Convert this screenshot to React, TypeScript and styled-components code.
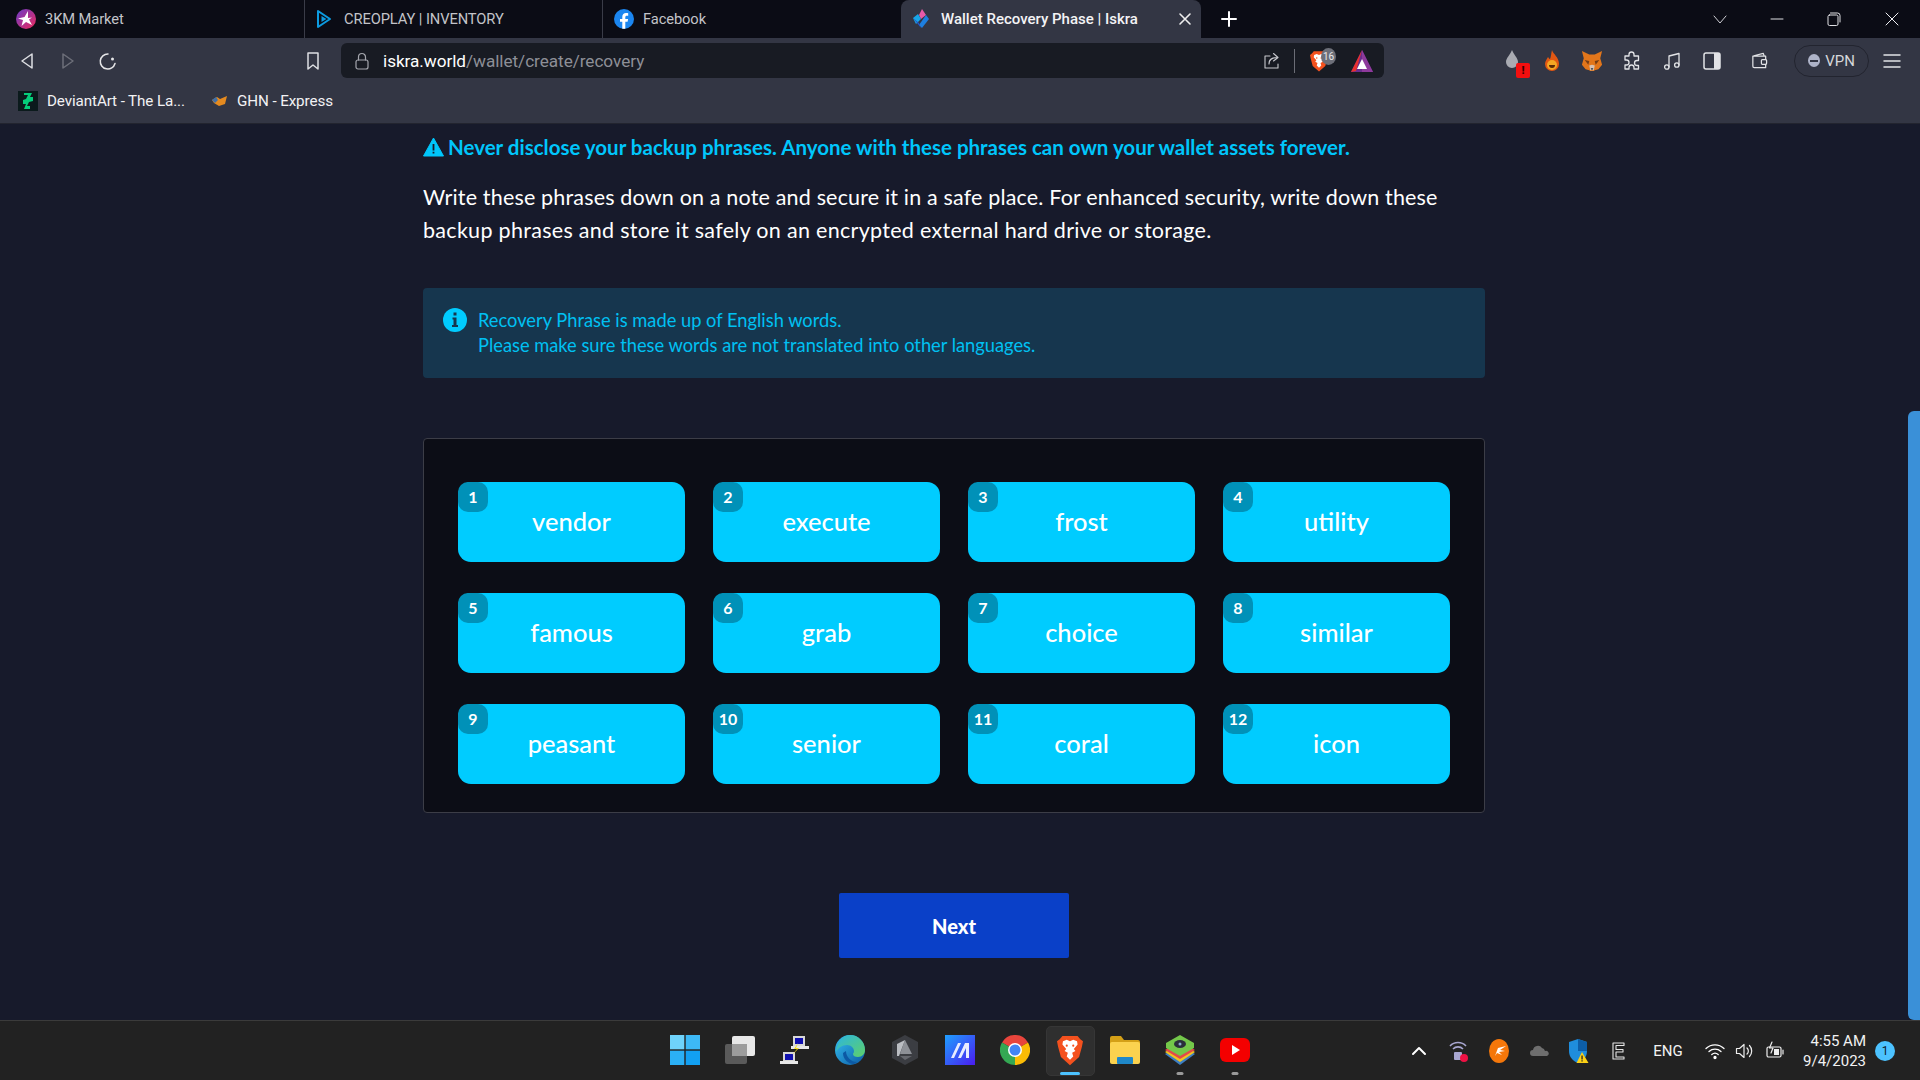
import React from "react";
import styled, { createGlobalStyle } from "styled-components";

const Global = createGlobalStyle`
  html, body { margin: 0; padding: 0; width: 1920px; height: 1080px; overflow: hidden; background: #171a2b; }
  * { box-sizing: border-box; }
  #root { width: 1920px; height: 1080px; }
`;

const UI = `Roboto, "Noto Sans", sans-serif`;
const PAGE = `Lato, "Open Sans", sans-serif`;

const Shell = styled.div`
  width: 1920px; height: 1080px; display: flex; flex-direction: column; font-family: ${UI};
`;
const TabStrip = styled.div`
  height: 38px; background: #0b0c15; display: flex; align-items: stretch; flex: none;
`;
const Tab = styled.div<{ $w: number; $pad: number; $sep?: boolean }>`
  width: ${p => p.$w}px; flex: none; display: flex; align-items: center; gap: 9px; padding-left: ${p => p.$pad}px;
  color: #c3c4c9; font-size: 14.7px; letter-spacing: -0.1px; position: relative;
  border-right: ${p => (p.$sep ? "1px solid #3a3c48" : "none")};
`;
const ActiveTab = styled.div`
  width: 300px; flex: none; background: #333644; border-radius: 8px 8px 0 0; display: flex; align-items: center;
  padding: 0 9px 0 11px; gap: 11px; color: #f3f3f5; font-size: 15px; font-weight: 500;
`;
const TabTitle = styled.span` flex: 1; white-space: nowrap; `;
const NewTab = styled.div` width: 56px; display: flex; align-items: center; justify-content: center; `;
const WindowControls = styled.div` margin-left: auto; display: flex; align-items: center; `;
const WinBtn = styled.div<{ $w: number }>` width: ${p => p.$w}px; display: flex; justify-content: center; align-items: center; `;

const Chrome = styled.div` height: 86px; background: #333644; flex: none; display: flex; flex-direction: column; border-bottom: 1px solid #22242f; `;
const ToolRow = styled.div` height: 45px; padding: 5px 0 5px 7px; display: flex; align-items: center; flex: none; `;
const IconBtn = styled.div<{ $w?: number; $pl?: number }>`
  width: ${p => p.$w ?? 40}px; height: 35px; flex: none; display: flex; align-items: center; justify-content: center; position: relative;
  padding-left: ${p => p.$pl ?? 0}px;
`;
const Spacer = styled.div<{ $w: number }>` width: ${p => p.$w}px; flex: none; `;
const Address = styled.div`
  width: 1043px; height: 35px; margin-left: 8px; background: #181b23; border-radius: 6px; flex: none;
  display: flex; align-items: center; padding-left: 12px; font-size: 17.2px;
`;
const Url = styled.div` margin-left: 12px; color: #8d8f97; flex: 1; white-space: nowrap; letter-spacing: -0.05px; `;
const Host = styled.span` color: #fff; `;
const ShareGap = styled.span` width: 9px; flex: none; `;
const AddrDivider = styled.div` width: 1px; height: 24px; background: #6b6d76; margin: 0 4px; flex: none; `;
const ShieldBtn = styled.div` width: 40px; height: 35px; position: relative; display: flex; align-items: center; justify-content: center; flex: none; `;
const ShieldCount = styled.div`
  position: absolute; top: 5px; left: 22px; width: 15px; height: 17px; background: #6d6f79; color: #e8e8ea; border-radius: 50%;
  font-size: 10px; display: flex; align-items: center; justify-content: center;
`;
const AlertBadge = styled.div`
  position: absolute; right: 2px; bottom: 0; width: 14px; height: 15px; background: #f40f0f; border-radius: 2px; color: #3a0000;
  font-size: 11px; font-weight: 900; display: flex; align-items: center; justify-content: center;
`;
const Vpn = styled.div`
  width: 75px; height: 32px; border: 1px solid #22242f; border-radius: 16px; display: flex; align-items: center; justify-content: center; gap: 5px;
  color: #d5d6da; font-size: 15px; margin-left: 15px; flex: none;
`;
const VpnDot = styled.span`
  width: 12px; height: 13px; border-radius: 50%; background: #aeb3c8; display: flex; align-items: center; justify-content: center;
  &::after { content: ""; width: 8px; height: 2px; background: #333644; }
`;
const Bookmarks = styled.div` height: 40px; display: flex; align-items: center; padding: 0 0 4px 18px; color: #f2f2f4; font-size: 15.2px; letter-spacing: -0.1px; `;
const Bookmark = styled.div<{ $w: number }>` width: ${p => p.$w}px; display: flex; align-items: center; gap: 9px; white-space: nowrap; flex: none; `;

const Main = styled.main`
  flex: 1; min-height: 0; background: #171a2b; position: relative; padding: 11px 12px 0 0; overflow: hidden;
`;
const Scrollbar = styled.div`
  position: absolute; right: 0; top: 287px; bottom: 0; width: 12px; background: #3a90d8; border-radius: 6px 0 0 6px;
`;
const Content = styled.div` width: 1062px; margin: 0 auto; display: flex; flex-direction: column; align-items: stretch; `;
const Warning = styled.div`
  height: 24px; display: flex; align-items: center; gap: 4px; color: #00c6fb; font-family: ${PAGE}; font-size: 20.5px; font-weight: 700;
  white-space: nowrap;
`;
const Para = styled.p`
  margin: 22px 0 0; color: #fff; font-family: ${PAGE}; font-size: 21.5px; line-height: 33px; font-weight: 400; white-space: nowrap;
`;
const ParaLine = styled.span<{ $ls: number }>` display: block; letter-spacing: ${p => p.$ls}px; `;
const Info = styled.div`
  margin-top: 41px; height: 90px; background: #16364e; border-radius: 4px; display: flex; padding: 20px 20px; gap: 11px;
`;
const InfoText = styled.div` color: #00c0f2; font-family: ${PAGE}; font-size: 18.3px; line-height: 25px; white-space: nowrap; `;
const Card = styled.section`
  margin-top: 60px; height: 375px; background: #0c0d16; border: 1px solid #3c3d47; border-radius: 4px; padding: 43px 34px 27px 34px;
  display: grid; grid-template-columns: repeat(4, 227px); grid-auto-rows: 80px; column-gap: 28px; row-gap: 31px;
`;
const Word = styled.div`
  background: #00ccff; border-radius: 13px; position: relative; display: flex; align-items: center; justify-content: center;
  color: #fff; font-family: ${PAGE}; font-size: 25.5px; font-weight: 500; padding-bottom: 2px;
`;
const Num = styled.span`
  position: absolute; left: 0; top: 0; width: 30px; height: 28px; background: #0091b8; border-radius: 10px; color: #fff;
  display: flex; align-items: center; justify-content: center; font-family: ${PAGE}; font-size: 16px; font-weight: 700; padding-bottom: 1px; height: 30px;
`;
const NextWrap = styled.div` margin-top: 80px; display: flex; justify-content: center; `;
const Next = styled.button`
  width: 230px; height: 65px; background: #0a40c8; color: #fff; border: 0; border-radius: 2px; font-family: ${PAGE}; font-size: 20px; font-weight: 900;
`;

const Taskbar = styled.footer`
  height: 60px; flex: none; background: #222222; border-top: 1px solid #3b3b3b; display: grid; grid-template-columns: 1fr auto 1fr; align-items: center;
`;
const TaskIcons = styled.div` grid-column: 2; display: flex; `;
const TaskIcon = styled.div<{ $active?: boolean }>`
  width: 55px; height: 50px; padding-bottom: 2px; display: flex; align-items: center; justify-content: center; position: relative; border-radius: 5px; flex: none;
  &::before { content: ""; position: absolute; left: 3px; right: 3px; top: 0; bottom: 0; border-radius: 5px; background: ${p => (p.$active ? "#2f2f2f" : "transparent")};
    border: ${p => (p.$active ? "1px solid #363636" : "0")}; }
  & > svg { position: relative; }
`;
const Dot = styled.span<{ $on?: boolean }>`
  position: absolute; bottom: 1px; left: 50%; transform: translateX(-50%); height: 3px; border-radius: 2px;
  width: ${p => (p.$on ? "20px" : "7px")}; background: ${p => (p.$on ? "#4cc2ff" : "#9a9a9a")};
`;
const Tray = styled.div` grid-column: 3; justify-self: end; display: flex; align-items: center; padding-right: 25px; color: #fff; `;
const TrayIcon = styled.div<{ $w?: number }>` width: ${p => p.$w ?? 40}px; height: 40px; display: flex; align-items: center; justify-content: center; flex: none; `;
const Eng = styled.div` width: 48px; text-align: center; font-size: 15px; color: #f2f2f2; flex: none; margin-left: 5px; margin-right: 8px; `;
const Clock = styled.div` text-align: right; font-size: 15px; line-height: 20px; color: #f2f2f2; width: 76px; flex: none; `;
const Notif = styled.div`
  width: 20px; height: 20px; background: #4cc2ff; border-radius: 50%; color: #10202a; font-size: 12px; display: flex; align-items: center; justify-content: center; margin-left: 9px; flex: none;
`;

const Stroke = ({ size = 20, color = "#e6e6e8", sw = 1.5, vb = 20, children }: { size?: number; color?: string; sw?: number; vb?: number; children: React.ReactNode }) => (
  <svg width={size} height={size} viewBox={`0 0 ${vb} ${vb}`} fill="none" stroke={color} strokeWidth={sw} strokeLinecap="round" strokeLinejoin="round">{children}</svg>
);

const BraveGlyph = ({ w = 18, h = 22 }: { w?: number; h?: number }) => (
  <svg width={w} height={h} viewBox="0 0 24 28">
    <path d="M5 1h14l2.5 3L24 6l-1 5-2.6 9.5L12 28 3.6 20.5 1 11 0 6l2.5-2z" fill="#f4511e" />
    <path d="M12 6l-3-1.5L5.5 6 5 9l3.5 4-1.5 2 3 1.5L9 20l3 3 3-3-1-3.5 3-1.5-1.5-2L19 9l-.5-3-3.5-1.5z" fill="#fff" />
    <circle cx="9" cy="10" r="1" fill="#f4511e" /><circle cx="15" cy="10" r="1" fill="#f4511e" />
  </svg>
);

const Fox = ({ size = 22 }: { size?: number }) => (
  <svg width={size} height={size} viewBox="0 0 24 24">
    <path d="M1 1l8 4h6l8-4-2 8 2 7-4 5-4 1-1 1h-4l-1-1-4-1-4-5 2-7z" fill="#e2761b" />
    <path d="M4 11l5 1-1 4zM20 11l-5 1 1 4z" fill="#763d16" />
    <path d="M9 17l3-1 3 1-1 5h-4z" fill="#d7c1b3" />
    <path d="M10.5 20h3l-1.5 2z" fill="#233447" />
  </svg>
);

const words = ["vendor", "execute", "frost", "utility", "famous", "grab", "choice", "similar", "peasant", "senior", "coral", "icon"];

export default function App() {
  return (
    <Shell>
      <Global />
      <TabStrip>
        <Tab $w={305} $pad={16} $sep>
          <svg width="20" height="20" viewBox="0 0 20 20">
            <defs><linearGradient id="k" x1="0" y1="0" x2="1" y2="1"><stop offset="0" stopColor="#6a3bc8" /><stop offset="1" stopColor="#ee2a5c" /></linearGradient></defs>
            <circle cx="10" cy="10" r="10" fill="url(#k)" />
            <path d="M12 2L8.5 8 2 9.5l5 1.5-1.5 6 4.5-4 6 3-3-5.5 3-2-4 .5z" fill="#fff" />
          </svg>
          <span>3KM Market</span>
        </Tab>
        <Tab $w={298} $pad={11} $sep>
          <svg width="16" height="20" viewBox="0 0 16 20" fill="none"><path d="M2 2l12 8-12 8z" stroke="#0c9be0" strokeWidth="2" strokeLinejoin="round" /><path d="M5.5 7l5 3-5 3z" fill="#0c9be0" /></svg>
          <span style={{ marginLeft: 3 }}>CREOPLAY | INVENTORY</span>
        </Tab>
        <Tab $w={298} $pad={11}>
          <svg width="20" height="20" viewBox="0 0 20 20"><circle cx="10" cy="10" r="10" fill="#1b86f0" /><path d="M13.6 12.8l.5-2.8h-2.8V8.2c0-.8.4-1.5 1.6-1.5h1.3V4.3s-1.1-.2-2.2-.2c-2.2 0-3.7 1.4-3.7 3.8V10H6v2.8h2.3v7h3v-7z" fill="#fff" /></svg>
          <span>Facebook</span>
        </Tab>
        <ActiveTab>
          <svg width="18" height="20" viewBox="0 0 18 20">
            <path d="M10 0l4 6-5 4-2-4z" fill="#e85aa8" /><path d="M9 10l-5 5-3-6 5-4z" fill="#18a6e8" /><path d="M14 6l3 4-7 9-3-3z" fill="#1e7fe0" /><path d="M1 9l8 10-2-5z" fill="#2456c8" />
          </svg>
          <TabTitle>Wallet Recovery Phase | Iskra</TabTitle>
          <Stroke size={14} vb={14} color="#eee" sw={1.6}><path d="M2 2l10 10M12 2L2 12" /></Stroke>
        </ActiveTab>
        <NewTab><Stroke size={16} vb={16} color="#fff" sw={2}><path d="M8 1v14M1 8h14" /></Stroke></NewTab>
        <WindowControls>
          <WinBtn $w={58}><Stroke size={14} vb={14} color="#cfcfd4" sw={1}><path d="M1 4l6 7 6-7" /></Stroke></WinBtn>
          <WinBtn $w={56}><Stroke size={14} vb={14} color="#e0e0e4" sw={1}><path d="M1 7h12" /></Stroke></WinBtn>
          <WinBtn $w={58}><Stroke size={14} vb={14} color="#e0e0e4" sw={1}><rect x="1" y="3" width="10" height="10.5" rx="1.5" /><path d="M3.5 1h7A2.5 2.5 0 0 1 13 3.5V10" /></Stroke></WinBtn>
          <WinBtn $w={57}><Stroke size={14} vb={14} color="#f0f0f4" sw={1}><path d="M1 1l12 12M13 1L1 13" /></Stroke></WinBtn>
        </WindowControls>
      </TabStrip>

      <Chrome>
        <ToolRow>
          <IconBtn><Stroke size={20} color="#dedfe3"><path d="M15 3v14L5 10z" /></Stroke></IconBtn>
          <IconBtn><Stroke size={20} color="#6d6f79"><path d="M6 3v14l10-7z" /></Stroke></IconBtn>
          <IconBtn><Stroke size={20} color="#e6e6e8"><path d="M11 3a7.5 7.5 0 1 0 7 9.5" /><circle cx="15.5" cy="8" r="1.5" fill="#e6e6e8" stroke="none" /></Stroke></IconBtn>
          <Spacer $w={166} />
          <IconBtn><Stroke size={20} color="#dedfe3"><path d="M5 2h10v16l-5-4-5 4z" /></Stroke></IconBtn>
          <Address>
            <Stroke size={18} vb={18} color="#a4a6ad" sw={1.2}><rect x="3" y="8" width="12" height="9" rx="2" /><path d="M5.5 8V5a3.5 3.5 0 0 1 7 0v3" /></Stroke>
            <Url><Host>iskra.world</Host>/wallet/create/recovery</Url>
            <Stroke size={20} color="#c8c9ce" sw={1.1}><path d="M9 5H4v12h13v-4" /><path d="M8 13c0-4 3-6.5 8-6.5M12.5 2.5L17 6.5l-4.5 3.5" /></Stroke>
            <ShareGap />
            <AddrDivider />
            <ShieldBtn>
              <BraveGlyph w={18} h={24} />
              <ShieldCount>16</ShieldCount>
            </ShieldBtn>
            <IconBtn $w={45}>
              <svg width="24" height="24" viewBox="0 0 24 24"><path d="M12 1l11 22H1z" fill="#6b2d8e" /><path d="M12 1l11 22H12z" fill="#8e3a9c" /><path d="M12 1L1 23l5-1z" fill="#e8302e" /><path d="M12 10l5 10H7z" fill="#fff" /></svg>
            </IconBtn>
          </Address>
          <Spacer $w={108} />
          <IconBtn>
            <svg width="16" height="24" viewBox="0 0 16 24"><path d="M8 1c2 5 6 8 6 12a6 6 0 0 1-12 0c0-4 4-7 6-12z" fill="#a9abb2" /></svg>
            <AlertBadge>!</AlertBadge>
          </IconBtn>
          <IconBtn>
            <svg width="16" height="22" viewBox="0 0 16 22"><path d="M8 0c1 4 7 7 7 14a7 7 0 0 1-14 0c0-3 2-5 3-7 1 1 1 2 2 2 1-2 1-5 2-9z" fill="#e25712" /><circle cx="8" cy="15" r="5" fill="#f5a623" /><path d="M5 15a3 3 0 0 0 6 0z" fill="#5b2a06" /></svg>
          </IconBtn>
          <IconBtn><Fox /></IconBtn>
          <IconBtn>
            <Stroke size={20} color="#e2e3e6" sw={1.3}><path d="M7 3.5a2.5 2.5 0 0 1 5 0V5h4.5v4.5H15a2.5 2.5 0 0 0 0 5h1.5V18H12v-1.5a2.5 2.5 0 0 0-5 0V18H3v-4h1.5a2.500 2.500 0 0 0 0-5H3V5h4z" /></Stroke>
          </IconBtn>
          <IconBtn>
            <Stroke size={20} color="#e2e3e6" sw={1.3}><path d="M7 16V5l10-2.5V14" /><circle cx="4.8" cy="16" r="2.2" /><circle cx="14.8" cy="14" r="2.2" /></Stroke>
          </IconBtn>
          <IconBtn>
            <svg width="18" height="18" viewBox="0 0 18 18"><rect x="1" y="1" width="16" height="16" rx="2" fill="none" stroke="#e2e3e6" strokeWidth="1.5" /><rect x="11" y="1" width="6" height="16" fill="#e2e3e6" /></svg>
          </IconBtn>
          <IconBtn $w={47} $pl={7}>
            <Stroke size={19} color="#e2e3e6" sw={1.3}><path d="M3 5.5V16a1.5 1.5 0 0 0 1.5 1.5h12V14M16.500 9V5.500h-13M4 5l10-2.500 1 3" /><rect x="12" y="9" width="5.5" height="5" rx="1" /></Stroke>
          </IconBtn>
          <Vpn><VpnDot />VPN</Vpn>
          <IconBtn $w={42} $pl={4}>
            <Stroke size={20} color="#e2e3e6" sw={1.5}><path d="M2 4h16M2 10h16M2 16h16" /></Stroke>
          </IconBtn>
        </ToolRow>
        <Bookmarks>
          <Bookmark $w={194}>
            <svg width="20" height="20" viewBox="0 0 20 20"><rect width="20" height="20" fill="#0b1a1c" /><path d="M14 2l-2 4h3v4l-4 1-2 4 3 0v3H6l2-5-3 0V9l3-1 2-4-4 0V2z" fill="#05cc7a" /></svg>
            <span>DeviantArt - The La...</span>
          </Bookmark>
          <Bookmark $w={140}>
            <svg width="16" height="12" viewBox="0 0 16 12"><path d="M0 5l5-3 3 2 7-3-2 8-6 2-5-3z" fill="#e58a1f" /><path d="M0 5l4-3 2 3-3 3z" fill="#3f6fa8" /></svg>
            <span>GHN - Express</span>
          </Bookmark>
        </Bookmarks>
      </Chrome>

      <Main>
        <Content>
          <Warning>
            <svg width="21" height="20" viewBox="0 0 21 20"><path d="M10.5 1L20.5 19H.5z" fill="#00c6fb" stroke="#00c6fb" strokeLinejoin="round" /><path d="M9.6 7h1.800v6.500H9.600zM9.600 14.700h1.800v1.800H9.600z" fill="#171a2b" /></svg>
            <span>Never disclose your backup phrases. Anyone with these phrases can own your wallet assets forever.</span>
          </Warning>
          <Para>
            <ParaLine $ls={0.17}>Write these phrases down on a note and secure it in a safe place. For enhanced security, write down these</ParaLine>
            <ParaLine $ls={0.3}>backup phrases and store it safely on an encrypted external hard drive or storage.</ParaLine>
          </Para>
          <Info>
            <svg width="24" height="24" viewBox="0 0 24 24" style={{ flex: "none" }}><circle cx="12" cy="12" r="12" fill="#00ccff" /><path d="M10.5 4.5h3v3h-3zM9.500 9.500h4v7.500h1.500v2H9v-2h1.500v-5.500h-1z" fill="#16364e" /></svg>
            <InfoText>
              Recovery Phrase is made up of English words.<br />
              Please make sure these words are not translated into other languages.
            </InfoText>
          </Info>
          <Card>
            {words.map((w, i) => (
              <Word key={w}><Num>{i + 1}</Num>{w}</Word>
            ))}
          </Card>
          <NextWrap><Next>Next</Next></NextWrap>
        </Content>
        <Scrollbar />
      </Main>

      <Taskbar>
        <TaskIcons>
          <TaskIcon>
            <svg width="30" height="30" viewBox="0 0 30 30"><rect x="0" y="0" width="14.3" height="14.3" fill="#6fd3fb" /><rect x="15.7" y="0" width="14.3" height="14.3" fill="#3db9f6" /><rect x="0" y="15.7" width="14.3" height="14.3" fill="#2bb0f5" /><rect x="15.7" y="15.7" width="14.3" height="14.3" fill="#12a0f2" /></svg>
          </TaskIcon>
          <TaskIcon>
            <svg width="30" height="28" viewBox="0 0 30 28"><rect x="0" y="8" width="22" height="20" rx="2" fill="#5a5a5a" /><rect x="7" y="0" width="23" height="20" rx="2" fill="#e8e8e8" /><rect x="7" y="8" width="15" height="12" fill="#9d9d9d" /></svg>
          </TaskIcon>
          <TaskIcon>
            <svg width="30" height="30" viewBox="0 0 30 30"><rect x="13" y="1" width="12" height="10" fill="#d8d8d8" /><rect x="15" y="3" width="8" height="6" fill="#1010b0" /><rect x="11" y="11" width="18" height="3" fill="#e8e8e8" /><rect x="3" y="17" width="12" height="10" fill="#d8d8d8" /><rect x="5" y="19" width="8" height="6" fill="#1010b0" /><rect x="0" y="26" width="18" height="3" fill="#e8e8e8" /><path d="M18 8l-4 6h3l-5 6 7-7h-3z" fill="#f6e020" /></svg>
          </TaskIcon>
          <TaskIcon>
            <svg width="30" height="30" viewBox="0 0 30 30">
              <defs><linearGradient id="e" x1="0" y1="0" x2="1" y2="1"><stop offset="0" stopColor="#35c1f1" /><stop offset="1" stopColor="#0c59a4" /></linearGradient><linearGradient id="eg" x1="0" y1="0" x2="1" y2="1"><stop offset="0" stopColor="#2cb5e0" /><stop offset="1" stopColor="#5fd068" /></linearGradient></defs>
              <circle cx="15" cy="15" r="15" fill="url(#e)" />
              <path d="M15 0a15 15 0 0 1 15 15c0 4-3 7-7 7-3 0-5-1-5-3 0-1 1-1 1-3 0-3-3-6-7-6-5 0-9 3-11 7C2 7 8 0 15 0z" fill="url(#eg)" />
              <path d="M11 16c0 6 5 11 11 11l-3 2C13 29 8 24 8 18z" fill="#0c59a4" />
            </svg>
          </TaskIcon>
          <TaskIcon>
            <svg width="26" height="30" viewBox="0 0 26 30"><path d="M13 0l13 7v16l-13 7L0 23V7z" fill="#3b3d42" /><path d="M13 5l7 14H8z" fill="#8d9096" /><path d="M5 9l8-4-6 16H5z" fill="#babdc2" /><path d="M8 21h12l-7 4z" fill="#66686e" /></svg>
          </TaskIcon>
          <TaskIcon>
            <svg width="30" height="30" viewBox="0 0 30 30"><defs><linearGradient id="m" x1="0" y1="0" x2="1" y2="1"><stop offset="0" stopColor="#1fa0ff" /><stop offset="1" stopColor="#4a1cf0" /></linearGradient></defs><rect width="30" height="30" fill="url(#m)" /><path d="M6 23l7-15h3l-7 15zM13 23l7-15h4v15h-3V13l-5 10z" fill="#e8ecff" /></svg>
          </TaskIcon>
          <TaskIcon>
            <svg width="30" height="30" viewBox="0 0 30 30"><path d="M15 15L2 7.5A15 15 0 0 1 28 7.5z" fill="#e8453c" /><path d="M15 15L2 7.5A15 15 0 0 0 15 30z" fill="#34a853" /><path d="M15 15L28 7.5A15 15 0 0 1 15 30z" fill="#fbbc05" /><circle cx="15" cy="15" r="7" fill="#fff" /><circle cx="15" cy="15" r="5.5" fill="#4285f4" /></svg>
          </TaskIcon>
          <TaskIcon $active>
            <BraveGlyph w={26} h={32} />
            <Dot $on />
          </TaskIcon>
          <TaskIcon>
            <svg width="30" height="30" viewBox="0 0 30 30"><path d="M0 3a2 2 0 0 1 2-2h9l3 4h14a2 2 0 0 1 2 2v3H0z" fill="#d4a017" /><rect y="7" width="30" height="22" rx="2" fill="#fbd24f" /><rect x="7" y="22" width="16" height="7" rx="1" fill="#1f88c9" /></svg>
          </TaskIcon>
          <TaskIcon>
            <svg width="30" height="30" viewBox="0 0 30 30"><path d="M15 10l15 9-15 11L0 19z" fill="#3c7fc4" /><path d="M15 8l15 9-15 10L0 17z" fill="#f0c420" /><path d="M15 6l15 9-15 9L0 15z" fill="#e34a4a" /><path d="M15 0l14 8v5l-14 8-14-8V8z" fill="#74c84a" /><ellipse cx="15" cy="9" rx="6" ry="4" fill="#2a2f3a" /><circle cx="15" cy="9" r="1.5" fill="#8ac" /></svg>
            <Dot />
          </TaskIcon>
          <TaskIcon>
            <svg width="30" height="24" viewBox="0 0 30 24"><rect width="30" height="24" rx="6" fill="#f40000" /><path d="M12 7l8 5-8 5z" fill="#fff" /></svg>
            <Dot />
          </TaskIcon>
        </TaskIcons>
        <Tray>
          <TrayIcon><Stroke size={16} vb={16} color="#fff" sw={2}><path d="M2 11l6-6 6 6" /></Stroke></TrayIcon>
          <TrayIcon>
            <svg width="20" height="24" viewBox="0 0 20 24" fill="none"><path d="M1 7a11 11 0 0 1 16 0M4 10a7 7 0 0 1 10 0" stroke="#a8a6d0" strokeWidth="1.6" /><rect x="5" y="13" width="8" height="8" rx="1" fill="#a8a6d0" /><circle cx="15" cy="19" r="4" fill="#ee1144" /></svg>
          </TrayIcon>
          <TrayIcon>
            <svg width="20" height="24" viewBox="0 0 20 24"><ellipse cx="10" cy="12" rx="10" ry="12" fill="#f5770a" /><path d="M6 17l3-8 8-2-6 4 5 1-6 1 3 3-5-2z" fill="#fff" /></svg>
          </TrayIcon>
          <TrayIcon>
            <svg width="20" height="12" viewBox="0 0 20 12"><path d="M4 11a3 3 0 0 1 0-6 5 5 0 0 1 9-2 4 4 0 0 1 3 3 2.5 2.5 0 0 1 2 5z" fill="#6e6e6e" /></svg>
          </TrayIcon>
          <TrayIcon>
            <svg width="20" height="24" viewBox="0 0 20 24"><path d="M9 0l9 3v9c0 6-4 10-9 12C4 22 0 18 0 12V3z" fill="#1f8ddc" /><path d="M9 0l9 3v9H9z" fill="#0d5ea8" /><path d="M13 13l6.5 11h-12z" fill="#fcd116" /><path d="M12.4 16.5h1.300v4h-1.300zM12.400 21.200h1.300v1.300h-1.300z" fill="#222" /></svg>
          </TrayIcon>
          <TrayIcon>
            <Stroke size={18} vb={18} color="#e6e6e6" sw={1.1}><path d="M3 1h11v2.500H6v4h7v2.500H6v5h8V17H3z" /></Stroke>
          </TrayIcon>
          <Eng>ENG</Eng>
          <TrayIcon $w={30}>
            <Stroke size={20} color="#fff" sw={1.3}><path d="M1 7.500a13 13 0 0 1 18 0M4 10.500a9 9 0 0 1 12 0M6.800 13.500a5 5 0 0 1 6.400 0" /><circle cx="10" cy="16.5" r="1" fill="#fff" /></Stroke>
          </TrayIcon>
          <TrayIcon $w={30}>
            <Stroke size={20} color="#eee" sw={1.2}><path d="M1.500 7.500h3L9 3.500v13l-4.500-4h-3zM12 7a4 4 0 0 1 0 6M14.500 4.500a8 8 0 0 1 0 11" /></Stroke>
          </TrayIcon>
          <TrayIcon $w={30}>
            <Stroke size={20} color="#eee" sw={1.2}><rect x="2" y="6" width="14" height="10" rx="1.5" /><path d="M18 9v4" /><path d="M7 1L4.500 7H8l-2 5" /><rect x="9" y="8" width="5" height="6" fill="#eee" stroke="none" /></Stroke>
          </TrayIcon>
          <Clock>4:55 AM<br />9/4/2023</Clock>
          <Notif>1</Notif>
        </Tray>
      </Taskbar>
    </Shell>
  );
}
